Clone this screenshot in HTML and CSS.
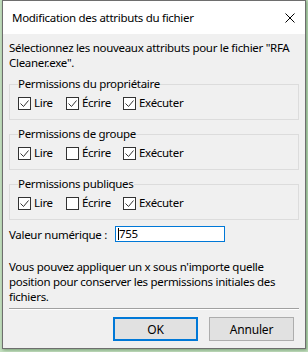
FILE: index.html
```html
<!DOCTYPE html>
<html lang="fr">
<head>
    <meta charset="UTF-8">
    <title>Modification des attributs du fichier</title>
    <link rel="stylesheet" href="styles.css">
</head>
<body>
    <div class="window">
        <div class="titlebar">
            <span class="title">Modification des attributs du fichier</span>
            <svg class="close" width="10" height="10" viewBox="0 0 10 10">
                <path d="M0.5 0.5 L9.5 9.5 M9.5 0.5 L0.5 9.5" stroke="#000" stroke-width="1" fill="none"/>
            </svg>
        </div>

        <div class="content">
            <p class="intro">Sélectionnez les nouveaux attributs pour le fichier "RFA Cleaner.exe".</p>

            <fieldset class="group">
                <legend>Permissions du propriétaire</legend>
                <div class="checks">
                    <label class="check"><span class="box"><svg viewBox="0 0 11 11"><path d="M1.5 5.5 L4.5 8.5 L9.5 2.5"/></svg></span>Lire</label>
                    <label class="check"><span class="box"><svg viewBox="0 0 11 11"><path d="M1.5 5.5 L4.5 8.5 L9.5 2.5"/></svg></span>Écrire</label>
                    <label class="check"><span class="box"><svg viewBox="0 0 11 11"><path d="M1.5 5.5 L4.5 8.5 L9.5 2.5"/></svg></span>Exécuter</label>
                </div>
            </fieldset>

            <fieldset class="group">
                <legend>Permissions de groupe</legend>
                <div class="checks">
                    <label class="check"><span class="box"><svg viewBox="0 0 11 11"><path d="M1.5 5.5 L4.5 8.5 L9.5 2.5"/></svg></span>Lire</label>
                    <label class="check"><span class="box"></span>Écrire</label>
                    <label class="check"><span class="box"><svg viewBox="0 0 11 11"><path d="M1.5 5.5 L4.5 8.5 L9.5 2.5"/></svg></span>Exécuter</label>
                </div>
            </fieldset>

            <fieldset class="group">
                <legend>Permissions publiques</legend>
                <div class="checks">
                    <label class="check"><span class="box"><svg viewBox="0 0 11 11"><path d="M1.5 5.5 L4.5 8.5 L9.5 2.5"/></svg></span>Lire</label>
                    <label class="check"><span class="box"></span>Écrire</label>
                    <label class="check"><span class="box"><svg viewBox="0 0 11 11"><path d="M1.5 5.5 L4.5 8.5 L9.5 2.5"/></svg></span>Exécuter</label>
                </div>
            </fieldset>

            <div class="value-row">
                <span class="value-label">Valeur numérique :</span>
                <div class="input"><span class="caret"></span>755</div>
            </div>

            <p class="hint">Vous pouvez appliquer un x sous n'importe quelle position pour conserver les permissions initiales des fichiers.</p>

            <div class="separator"></div>

            <div class="buttons">
                <button class="btn default">OK</button>
                <button class="btn">Annuler</button>
            </div>
        </div>
    </div>
</body>
</html>
```

FILE: styles.css
```css
body {
    margin: 0;
    padding: 0 2px 3px 2px;
    background: #c3dfbf;
    font-family: "Noto Sans", "Open Sans", sans-serif;
    font-size: 11.5px;
    letter-spacing: -0.3px;
    color: #000;
}

.window {
    border: 1px solid #6e6e6e;
    background: #f0f0f0;
    box-shadow: 1px 1px 3px rgba(40, 90, 40, 0.5);
}

.titlebar {
    height: 33px;
    background: #fff;
    display: flex;
    align-items: center;
    justify-content: space-between;
    padding: 0 10px 0 9px;
}

.title {
    line-height: 16px;
}

.close {
    display: block;
}

.content {
    padding: 6px 6px 7px 6px;
}

.intro {
    margin: 0;
    line-height: 15px;
}

.group {
    margin: 6px 0 0 0;
    padding: 0 8px 8px 8px;
    border: 1px solid #dcdcdc;
}

.group legend {
    padding: 0;
    line-height: 16px;
}

.checks {
    margin-top: 3px;
    display: grid;
    grid-template-columns: 48px 57px auto;
    height: 16px;
}

.check {
    display: flex;
    align-items: center;
    gap: 3px;
    line-height: 16px;
}

.box {
    width: 11px;
    height: 11px;
    border: 1px solid #333;
    background: #fff;
}

.box svg {
    display: block;
    width: 11px;
    height: 11px;
    fill: none;
    stroke: #333;
    stroke-width: 1;
}

.value-row {
    margin-top: 6px;
    display: flex;
    align-items: center;
    height: 16px;
}

.value-label {
    width: 106px;
    flex-shrink: 0;
    white-space: nowrap;
    line-height: 15px;
}

.input {
    width: 106px;
    height: 14px;
    border: 1px solid #0078d7;
    background: #fff;
    display: flex;
    align-items: center;
    padding-left: 2px;
    line-height: 14px;
}

.caret {
    width: 1px;
    height: 12px;
    background: #000;
}

.hint {
    margin: 17px 0 0 0;
    line-height: 15px;
}

.separator {
    margin-top: 4px;
    height: 1px;
    background: #a0a0a0;
    border-bottom: 1px solid #fff;
}

.buttons {
    margin-top: 7px;
    display: flex;
    justify-content: flex-end;
    gap: 11px;
    padding-right: 5px;
}

.btn {
    width: 85px;
    height: 24px;
    background: #e1e1e1;
    border: 1px solid #adadad;
    font-family: inherit;
    font-size: 12px;
    letter-spacing: -0.2px;
    color: #000;
    padding: 0;
}

.btn.default {
    border: 2px solid #0078d7;
}
```
